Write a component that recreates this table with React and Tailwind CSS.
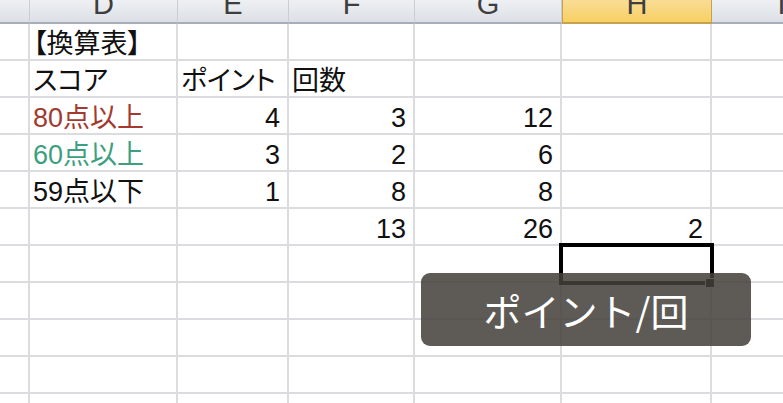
import React from 'react';

const columns = [
  { key: 'C', width: 'w-[30px]', label: '' },
  { key: 'D', width: 'w-[148px]', label: 'D' },
  { key: 'E', width: 'w-[111px]', label: 'E' },
  { key: 'F', width: 'w-[126px]', label: 'F' },
  { key: 'G', width: 'w-[147px]', label: 'G' },
  { key: 'H', width: 'w-[150px]', label: 'H' },
  { key: 'I', width: 'w-[140px]', label: 'I' },
];

// cell content per row, keyed by column letter
const rows = [
  { D: { text: '【換算表】' } },
  { D: { text: 'スコア' }, E: { text: 'ポイント' }, F: { text: '回数' } },
  { D: { text: '80点以上', color: 'text-[#a23a2f]' }, E: { text: '4', num: true }, F: { text: '3', num: true }, G: { text: '12', num: true } },
  { D: { text: '60点以上', color: 'text-[#3d9f80]' }, E: { text: '3', num: true }, F: { text: '2', num: true }, G: { text: '6', num: true } },
  { D: { text: '59点以下' }, E: { text: '1', num: true }, F: { text: '8', num: true }, G: { text: '8', num: true } },
  { F: { text: '13', num: true }, G: { text: '26', num: true }, H: { text: '2', num: true } },
  {}, {}, {}, {}, {},
];

const HeaderCell = ({ col }) => {
  const active = col.key === 'H';
  return (
    <div
      className={`${col.width} shrink-0 h-[24px] flex items-end justify-center overflow-hidden border-b-2 border-r ${
        active
          ? 'bg-gradient-to-b from-[#f9dd95] to-[#f8cf62] border-[#c4a24e] border-l'
          : 'bg-gradient-to-b from-[#eef0f3] to-[#dce0e6] border-b-[#a7aeb7] border-r-[#c9ced5]'
      }`}
    >
      <span className="text-[29px] leading-none pb-[3px] text-[#3e3e3e]">{col.label}</span>
    </div>
  );
};

const Cell = ({ col, cell }) => (
  <div
    className={`${col.width} shrink-0 h-[37px] flex items-end overflow-visible whitespace-nowrap border-b-2 border-r-2 border-[#dadcdf] ${
      cell?.num ? 'justify-end pr-[7px]' : 'justify-start pl-[3px]'
    }`}
  >
    {cell && <span className={`text-[27px] leading-none pb-[1px] ${cell.color || 'text-[#111]'}`}>{cell.text}</span>}
  </div>
);

export default function App() {
  return (
    <div className="w-[783px] h-[403px] overflow-hidden bg-white relative font-['Liberation_Sans','Noto_Sans_CJK_JP',sans-serif] [font-feature-settings:'palt']">
      {/* column headers */}
      <div className="flex">
        {columns.map((col) => (
          <HeaderCell key={col.key} col={col} />
        ))}
      </div>

      {/* sheet body */}
      {rows.map((row, i) => (
        <div key={i} className="flex">
          {columns.map((col) => (
            <Cell key={col.key} col={col} cell={row[col.key]} />
          ))}
        </div>
      ))}

      {/* selected cell */}
      <div className="absolute left-[559px] top-[243px] w-[155px] h-[42px] border-4 border-black" />
      <div className="absolute left-[705px] top-[278px] w-[10px] h-[10px] bg-black border border-white" />

      {/* caption */}
      <div className="absolute left-[421px] top-[273px] w-[330px] h-[73px] rounded-[9px] bg-[rgba(68,64,59,0.86)] flex items-center justify-center">
        <span className="text-white text-[38px] leading-none font-['Noto_Sans_CJK_JP',sans-serif] [font-feature-settings:normal]">ポイント/回</span>
      </div>
    </div>
  );
}
